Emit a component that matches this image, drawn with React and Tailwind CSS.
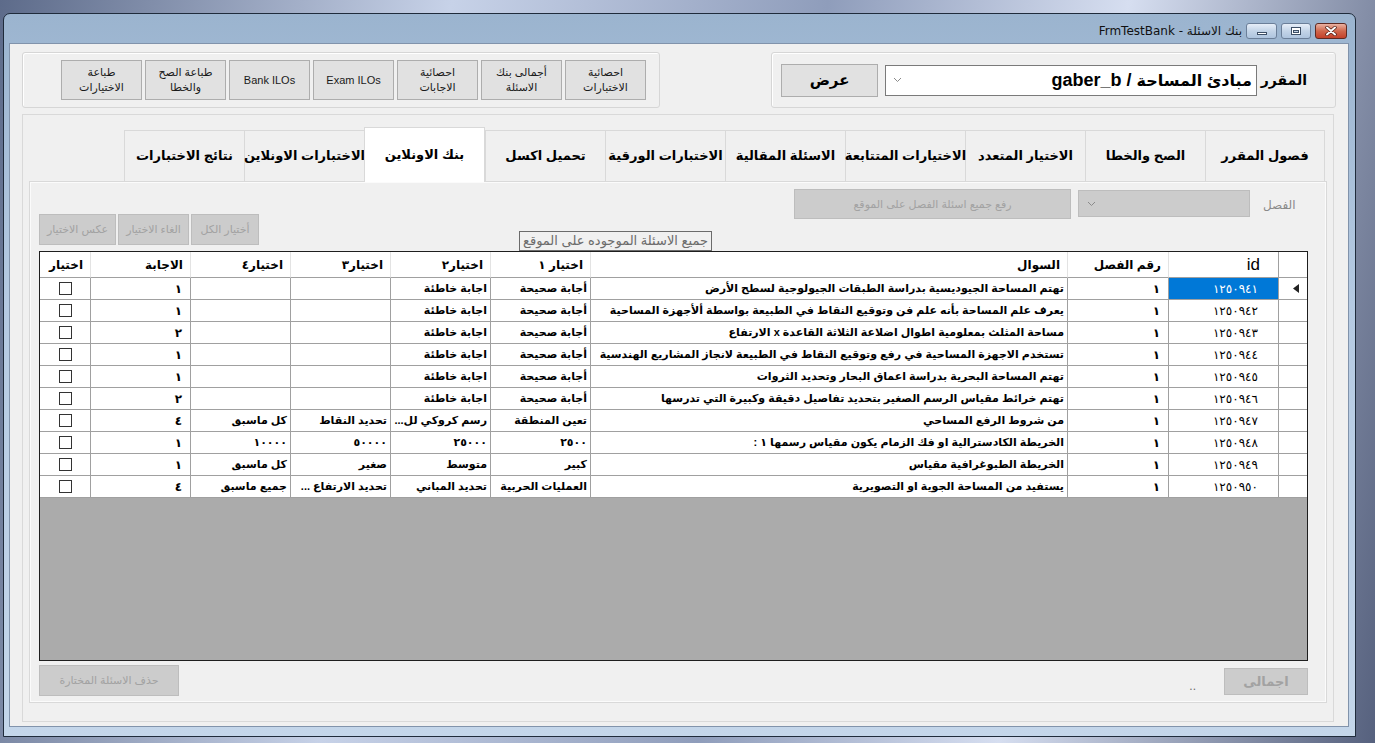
import React from "react";

const rows = [
  { id: "١٢٥٠٩٤١", q: "تهتم المساحة الجيوديسية بدراسة الطبقات الجيولوجية لسطح الأرض", c1: "أجابة صحيحة", c2: "اجابة خاطئة", c3: "", c4: "", a: "١" },
  { id: "١٢٥٠٩٤٢", q: "يعرف علم المساحة بأنه علم فن وتوقيع النقاط في الطبيعة بواسطة ألأجهزة المساحية", c1: "أجابة صحيحة", c2: "اجابة خاطئة", c3: "", c4: "", a: "١" },
  { id: "١٢٥٠٩٤٣", q: "مساحة المثلث بمعلومية اطوال اضلاعة الثلاثة القاعدة x الارتفاع", c1: "أجابة صحيحة", c2: "اجابة خاطئة", c3: "", c4: "", a: "٢" },
  { id: "١٢٥٠٩٤٤", q: "تستخدم الاجهزة المساحية في رفع وتوقيع النقاط في الطبيعة لانجاز المشاريع الهندسية", c1: "أجابة صحيحة", c2: "اجابة خاطئة", c3: "", c4: "", a: "١" },
  { id: "١٢٥٠٩٤٥", q: "تهتم المساحة البحرية بدراسة اعماق البحار وتحديد الثروات", c1: "أجابة صحيحة", c2: "اجابة خاطئة", c3: "", c4: "", a: "١" },
  { id: "١٢٥٠٩٤٦", q: "تهتم خرائط مقياس الرسم الصغير بتحديد تفاصيل دقيقة وكبيرة التي تدرسها", c1: "أجابة صحيحة", c2: "اجابة خاطئة", c3: "", c4: "", a: "٢" },
  { id: "١٢٥٠٩٤٧", q: "من شروط الرفع المساحي", c1: "تعين المنطقة", c2: "رسم كروكي لل...", c3: "تحديد النقاط", c4: "كل ماسبق", a: "٤" },
  { id: "١٢٥٠٩٤٨", q: "الخريطة الكادسترالية او فك الزمام يكون مقياس رسمها ١ :", c1: "٢٥٠٠", c2: "٢٥٠٠٠", c3: "٥٠٠٠٠", c4: "١٠٠٠٠", a: "١" },
  { id: "١٢٥٠٩٤٩", q: "الخريطة الطبوغرافية مقياس", c1: "كبير", c2: "متوسط", c3: "صغير", c4: "كل ماسبق", a: "١" },
  { id: "١٢٥٠٩٥٠", q: "يستفيد من المساحة الجوية او التصويرية", c1: "العمليات الحربية", c2: "تحديد المباني", c3: "تحديد الارتفاع ...", c4: "جميع ماسبق", a: "٤" },
];

const tools = [
  ["طباعة", "الاختيارات"],
  ["طباعة الصح", "والخطا"],
  ["Bank ILOs"],
  ["Exam ILOs"],
  ["احصائية", "الاجابات"],
  ["أجمالى بنك", "الاسئلة"],
  ["احصائية", "الاختبارات"],
];

const tabs = [
  "فصول المقرر",
  "الصح والخطا",
  "الاختيار المتعدد",
  "الاختيارات المتتابعة",
  "الاسئلة المقالية",
  "الاختبارات الورقية",
  "تحميل اكسل",
  "بنك الاونلاين",
  "الاختبارات الاونلاين",
  "نتائج الاختبارات",
];

const cols = "grid grid-cols-[29px_110px_101px_477px_100px_100px_100px_100px_100px_50px]";

function Chevron() {
  return (
    <svg width="9" height="6" viewBox="0 0 9 6" className="shrink-0">
      <path d="M1 1l3.5 3.5L8 1" fill="none" stroke="#8a8a8a" strokeWidth="1" />
    </svg>
  );
}

function CaptionButtons() {
  return (
    <div className="flex items-center gap-[4px]">
      <div className="w-[31px] h-[16px] rounded-[3px] border border-[#6b7f99] bg-[linear-gradient(#e6eef8,#c3d4e8_50%,#aec4de)] flex items-center justify-center">
        <div className="w-[10px] h-[3px] bg-white border border-[#3d4f66] mt-[5px]" />
      </div>
      <div className="w-[30px] h-[16px] rounded-[3px] border border-[#6b7f99] bg-[linear-gradient(#e6eef8,#c3d4e8_50%,#aec4de)] flex items-center justify-center">
        <div className="w-[10px] h-[8px] bg-white border border-[#3d4f66] flex items-center justify-center">
          <div className="w-[6px] h-[3px] bg-[#c3d4e8] border border-[#3d4f66]" />
        </div>
      </div>
      <div className="w-[32px] h-[16px] rounded-[3px] border border-[#5e2a22] bg-[linear-gradient(#eab2a2,#d0674c_50%,#c4412a)] flex items-center justify-center">
        <svg width="12" height="10" viewBox="0 0 12 10">
          <path d="M2 1.5l8 7M10 1.5l-8 7" stroke="#4a1a12" strokeWidth="3.4" strokeLinecap="round" />
          <path d="M2 1.5l8 7M10 1.5l-8 7" stroke="#fff" strokeWidth="2" strokeLinecap="round" />
        </svg>
      </div>
    </div>
  );
}

function Cell({ children, className = "" }) {
  return (
    <div className={"h-[22px] border-b border-l border-[#a0a0a0] flex items-center px-[3px] overflow-hidden whitespace-nowrap font-bold text-black " + className}>
      {children}
    </div>
  );
}

function Grid() {
  const heads = ["id", "رقم الفصل", "السوال", "اختيار ١", "اختيار٢", "اختيار٣", "اختيار٤", "الاجابة", "اختيار"];
  return (
    <div dir="rtl" className="w-[1269px] h-[410px] border border-[#1e1e1e] bg-[#ababab] flex flex-col overflow-hidden">
      <div className={cols + " bg-white"}>
        <div className="h-[26px] border-b border-l border-[#a0a0a0]" />
        {heads.map((h, i) => (
          <div
            key={h}
            className={
              "h-[26px] border-b border-[#a0a0a0] flex items-center overflow-hidden whitespace-nowrap " +
              (i < heads.length - 1 ? "border-l border-l-[#e3e3e3] " : "") +
              (i === 0 ? "pr-[18px] text-[17px] font-normal" : "pr-[7px] text-[12px] font-bold")
            }
          >
            {h}
          </div>
        ))}
      </div>
      {rows.map((r, i) => (
        <div key={r.id} className={cols + " bg-white"}>
          <div className="h-[22px] border-b border-l border-[#a0a0a0] flex items-center pr-[8px]">
            {i === 0 && (
              <svg width="6" height="9" viewBox="0 0 6 9">
                <path d="M6 0v9L0 4.5z" fill="#222" />
              </svg>
            )}
          </div>
          <Cell className={"pr-[20px] text-[12px] font-normal " + (i === 0 ? "bg-[#0078d7] text-white" : "")}>
            <span className={i === 0 ? "text-white" : ""}>{r.id}</span>
          </Cell>
          <Cell className="pr-[8px] text-[12px]">١</Cell>
          <Cell className="text-[11px]">{r.q}</Cell>
          <Cell className="text-[11px]">{r.c1}</Cell>
          <Cell className="text-[11px]">{r.c2}</Cell>
          <Cell className="text-[11px]">{r.c3}</Cell>
          <Cell className="text-[11px]">{r.c4}</Cell>
          <Cell className="pr-[8px] text-[12px]">{r.a}</Cell>
          <div className="h-[22px] border-b border-[#a0a0a0] flex items-center justify-center">
            <div className="w-[13px] h-[13px] bg-white border border-[#333]" />
          </div>
        </div>
      ))}
    </div>
  );
}

function DisabledBtn({ w, h, children, className = "" }) {
  return (
    <div
      style={{ width: w, height: h }}
      className={"bg-[#cccccc] border border-[#bdbdbd] flex items-center justify-center text-[#a2a2a2] text-[11px] whitespace-nowrap " + className}
    >
      {children}
    </div>
  );
}

export default function App() {
  return (
    <div className="w-[1375px] h-[743px] overflow-hidden bg-[linear-gradient(100deg,#5d6b8a,#c7d2e8_30%,#8f9dbb_55%,#d6def0_75%,#56617e)] pt-[13px] pl-[3px] font-['Liberation_Sans','DejaVu_Sans',sans-serif] text-black">
      <div className="w-[1353px] h-[724px] rounded-t-[7px] border border-[#1f2b3b] bg-[linear-gradient(#9bb4cf,#b5cae2_40%,#c4d6ea)] flex flex-col">
        {/* title bar */}
        <div className="h-[29px] flex items-start justify-end pt-[9px] pr-[8px] gap-[3px]">
          <span dir="rtl" className="text-[12px] leading-[16px] font-['DejaVu_Sans',sans-serif] text-[#111] mr-[1px]">
            بنك الاسئلة - FrmTestBank
          </span>
          <CaptionButtons />
        </div>

        {/* client */}
        <div className="ml-[5px] mr-[6px] h-[684px] bg-[#f0f0f0] border border-[#8193ab] flex flex-col">
          {/* top groups */}
          <div className="mt-[8px] px-[12px] flex justify-between">
            <div className="w-[638px] h-[56px] border border-[#d6d6d6] rounded-[3px] shadow-[inset_1px_1px_0_#fff] flex items-center gap-[3px] pl-[38px]">
              {tools.map((t, i) => (
                <div key={i} className="w-[81px] h-[40px] bg-[#e1e1e1] border border-[#adadad] flex flex-col items-center justify-center text-[11px] leading-[15px] text-[#1a1a1a] text-center">
                  {t.map((l) => (
                    <span key={l}>{l}</span>
                  ))}
                </div>
              ))}
            </div>
            <div dir="rtl" className="w-[565px] h-[56px] border border-[#d6d6d6] rounded-[3px] shadow-[inset_1px_1px_0_#fff] flex items-center pr-[28px]">
              <span className="text-[14px] font-bold w-[40px]">المقرر</span>
              <div className="ml-[7px] mr-[10px] w-[372px] h-[31px] bg-white border border-[#7a7a7a] flex items-center justify-between pr-[4px] pl-[7px]">
                <span className="text-[18px] font-bold whitespace-nowrap">
                  <span className="text-[16px]">مبادئ المساحة</span> / gaber_b
                </span>
                <Chevron />
              </div>
              <div className="w-[97px] h-[33px] bg-[#e1e1e1] border border-[#adadad] flex items-center justify-center text-[15px] font-bold">
                عرض
              </div>
            </div>
          </div>

          {/* main panel */}
          <div className="mt-[6px] ml-[12px] w-[1312px] h-[608px] border border-[#d9d9d9] pt-[12px] pl-[6px]">
            {/* tabs */}
            <div dir="rtl" className="w-[1298px] h-[54px] flex items-end pr-[2px]">
              {tabs.map((t, i) =>
                i === 7 ? (
                  <div key={t} className="relative z-10 -mb-px w-[121px] h-[55px] bg-white border border-[#d9d9d9] border-b-0 flex items-center justify-center text-[13px] font-bold whitespace-nowrap">
                    {t}
                  </div>
                ) : (
                  <div key={t} className={"w-[120px] h-[51px] bg-[#f0f0f0] border-t border-l border-[#d9d9d9] flex items-center justify-center text-[13px] font-bold whitespace-nowrap " + (i === 0 ? "border-r" : "")}>
                    {t}
                  </div>
                )
              )}
            </div>
            {/* tab page */}
            <div className="w-[1298px] h-[522px] border border-[#d9d9d9] bg-[#f0f0f0] shadow-[inset_0_0_0_1px_#fbfbfb] flex flex-col pl-[9px]">
              <div className="h-[69px] flex">
                <div className="flex items-start pt-[32px]">
                  <div className="flex gap-[2px]">
                    <DisabledBtn w={77} h={31}>عكس الاختيار</DisabledBtn>
                    <DisabledBtn w={71} h={31}>الغاء الاختيار</DisabledBtn>
                    <DisabledBtn w={68} h={31}>أختيار الكل</DisabledBtn>
                  </div>
                </div>
                <div className="self-end ml-[260px] h-[20px] px-[3px] border border-[#6b6b6b] flex items-center text-[13px] text-[#6b6b6b] whitespace-nowrap">
                  جميع الاسئلة الموجوده على الموقع
                </div>
                <div className="ml-auto pr-[25px] pt-[7px] flex items-start gap-[7px]">
                  <DisabledBtn w={277} h={30}>رفع جميع اسئلة الفصل على الموقع</DisabledBtn>
                  <div className="w-[172px] h-[27px] mt-[1px] bg-[#cccccc] border border-[#bdbdbd] flex items-center pl-[8px]">
                    <Chevron />
                  </div>
                  <span className="ml-[6px] mt-[7px] text-[12px] text-[#8a8a8a] w-[38px]">الفصل</span>
                </div>
              </div>
              <Grid />
              <div className="w-[1269px] mt-[4px] flex items-start">
                <DisabledBtn w={140} h={31}>حذف الاسئلة المختارة</DisabledBtn>
                <span className="ml-auto mt-[12px] text-[12px] text-[#6b6b6b]">..</span>
                <DisabledBtn w={84} h={27} className="ml-[28px] mt-[3px] text-[13px] font-bold">اجمالى</DisabledBtn>
              </div>
            </div>
          </div>
        </div>
      </div>
    </div>
  );
}
